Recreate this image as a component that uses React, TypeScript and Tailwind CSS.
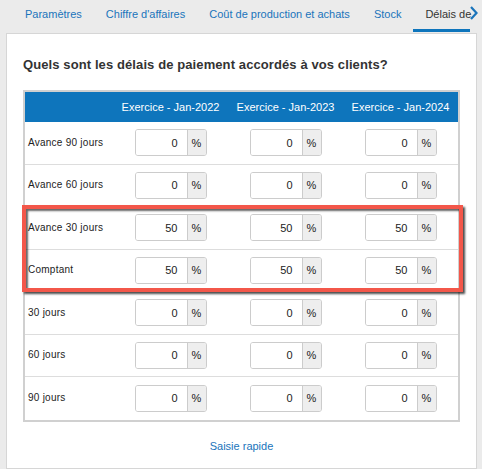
import { FC } from "react";

type Row = {
  label: string;
  values: number[];
};

const tabs = ["Paramètres", "Chiffre d'affaires", "Coût de production et achats", "Stock"];

const years = ["Exercice - Jan-2022", "Exercice - Jan-2023", "Exercice - Jan-2024"];

const rows: Row[] = [
  { label: "Avance 90 jours", values: [0, 0, 0] },
  { label: "Avance 60 jours", values: [0, 0, 0] },
  { label: "Avance 30 jours", values: [50, 50, 50] },
  { label: "Comptant", values: [50, 50, 50] },
  { label: "30 jours", values: [0, 0, 0] },
  { label: "60 jours", values: [0, 0, 0] },
  { label: "90 jours", values: [0, 0, 0] },
];

const PercentInput: FC<{ value: number }> = ({ value }) => (
  <div className="flex h-[27px] w-[72px] rounded-[3px] border border-[#cccccc] overflow-hidden">
    <input
      readOnly
      value={value}
      className="w-[51px] bg-white text-right pr-[9px] text-[11px] text-[#222] outline-none"
    />
    <div className="flex-1 flex items-center justify-center border-l border-[#cccccc] bg-[#eeeeee] text-[11px] text-[#222]">
      %
    </div>
  </div>
);

const App: FC = () => {
  return (
    <div className="relative w-[482px] h-[469px] overflow-hidden bg-[#ebebeb] flex flex-col font-['Liberation_Sans',Arial,sans-serif]">
      {/* tabs */}
      <div className="flex h-[33px] shrink-0">
        <div className="flex w-[469px] pl-[13px]">
          {tabs.map((t) => (
            <div key={t} className="px-3 pt-[6px] text-[11px] text-[#1a74bb] whitespace-nowrap">
              {t}
            </div>
          ))}
          <div className="relative pl-3 pt-[6px] text-[11px] text-[#333] whitespace-nowrap">
            Délais de
            <div className="absolute left-0 bottom-[1px] h-[3px] w-[57px] bg-[#0e75bc]"></div>
          </div>
        </div>
        <svg width="10" height="14" viewBox="0 0 10 14" className="mt-[6px]">
          <path d="M2 1 L7.5 7 L2 13" fill="none" stroke="#1a74bb" strokeWidth="2.2" />
        </svg>
      </div>

      {/* panel */}
      <div className="ml-[6px] w-[471px] flex-1 bg-white border border-[#d6d6d6] px-[16px]">
        <h2 className="pt-[22px] text-[13px] leading-[18px] font-bold text-[#333] tracking-[0.1px]">
          Quels sont les délais de paiement accordés à vos clients?
        </h2>

        <div className="mt-[16px] w-[437px] border-2 border-[#d0d0d0]">
          <div className="grid grid-cols-[88px_115px_115px_115px] h-[30px] bg-[#0e75bc] text-white text-[11px]">
            <div></div>
            {years.map((y) => (
              <div key={y} className="flex items-center justify-center">
                {y}
              </div>
            ))}
          </div>
          {rows.map((r, i) => (
            <div
              key={r.label}
              className={
                i < rows.length - 1
                  ? "grid grid-cols-[88px_115px_115px_115px] h-[42.5px] border-b border-[#dddddd]"
                  : "grid grid-cols-[88px_115px_115px_115px] h-[42.5px]"
              }
            >
              <div className="flex items-center pl-[3px] pb-[1px] text-[10px] tracking-[0.25px] text-[#222]">
                {r.label}
              </div>
              {r.values.map((v, j) => (
                <div key={j} className="flex items-center justify-center">
                  <PercentInput value={v} />
                </div>
              ))}
            </div>
          ))}
        </div>

        <div className="mt-[17px] text-center text-[11px] leading-[14px] text-[#1a74bb]">Saisie rapide</div>
      </div>

      {/* highlight annotation */}
      <div className="absolute left-[22px] top-[205px] w-[441px] h-[87px] border-4 border-[#f3574a] shadow-[2px_2px_2px_rgba(0,0,0,0.7),inset_2px_2px_2px_rgba(0,0,0,0.6)]"></div>
    </div>
  );
};

export default App;
